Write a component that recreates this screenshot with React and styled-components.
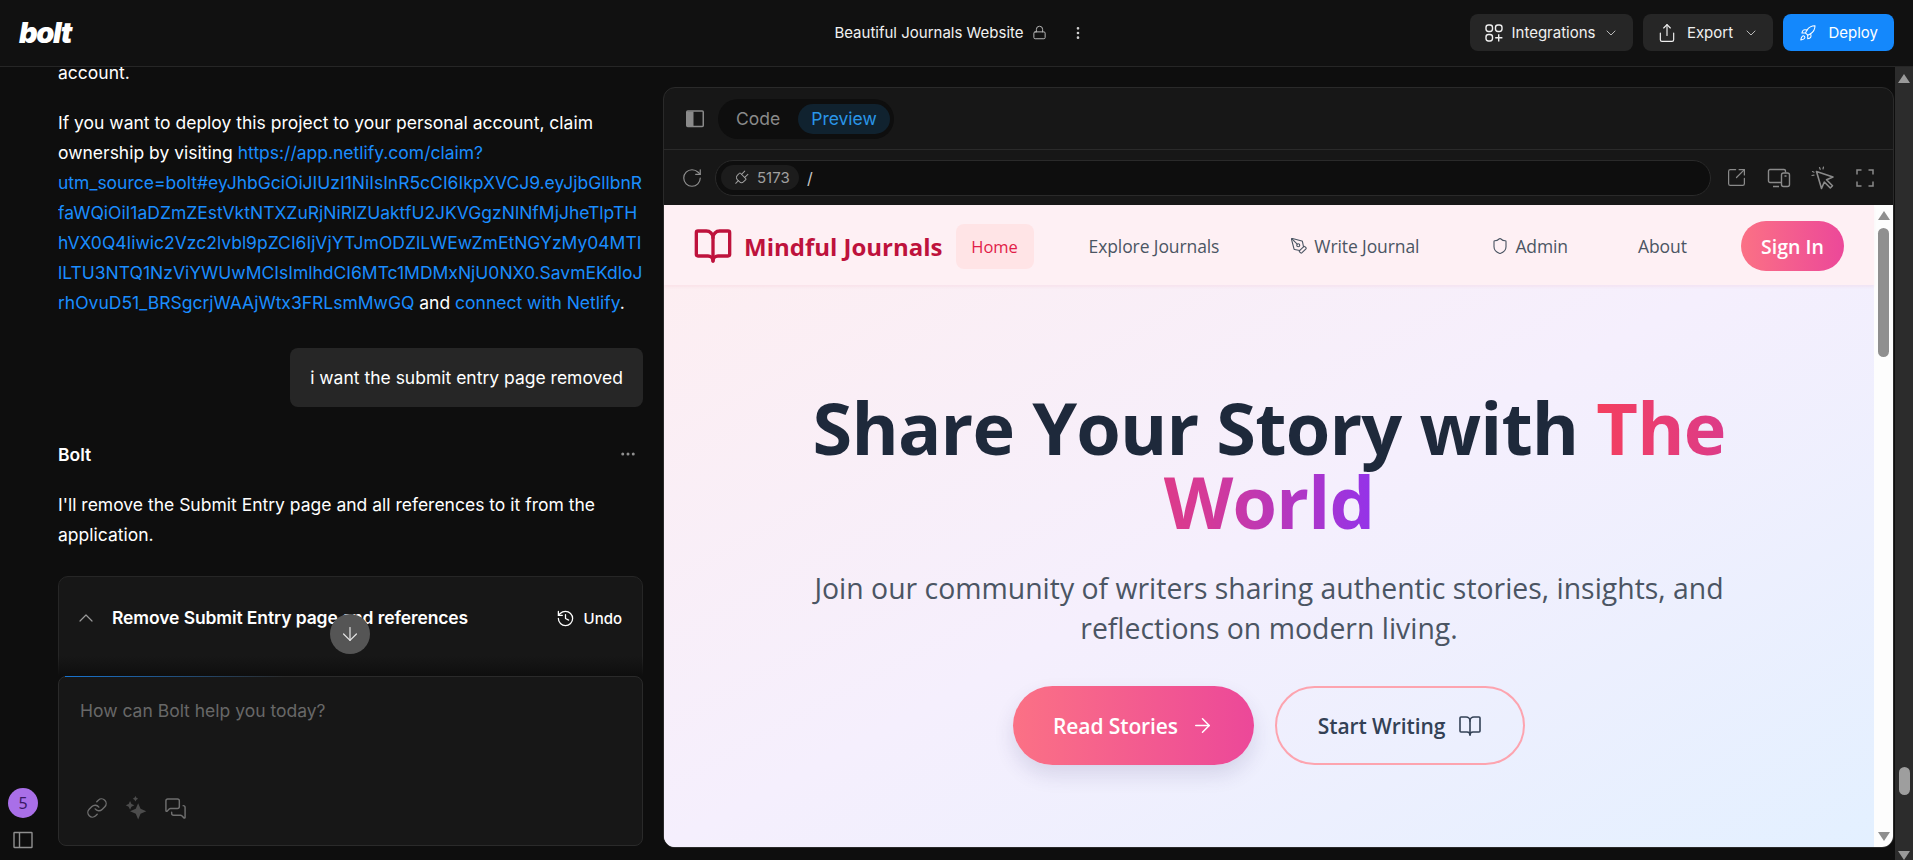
import React from "react";
import styled, { createGlobalStyle } from "styled-components";
import {
  ArrowDown,
  ArrowRight,
  BookOpen,
  ChevronDown,
  ChevronUp,
  History,
  Link,
  Lock,
  MessagesSquare,
  MoreHorizontal,
  MoreVertical,
  PenTool,
  Plug,
  RotateCw,
  Rocket,
  Share,
  Shield,
  SquareArrowOutUpRight,
} from "lucide-react";

const GlobalStyles = createGlobalStyle`
  html, body {
    margin: 0;
    height: 100%;
    overflow: hidden;
    background: #0e0e0e;
  }
  * { box-sizing: border-box; }
`;

const IntegrationsIcon = () => (
  <svg width="20" height="20" viewBox="0 0 20 20" fill="none" stroke="currentColor" strokeWidth="1.4">
    <rect x="2" y="2" width="6.5" height="6.5" rx="2.4" />
    <rect x="11.5" y="2" width="6.5" height="6.5" rx="2.4" />
    <rect x="2" y="11.5" width="6.5" height="6.5" rx="2.4" />
    <path d="M14.7 11.2v7.2M11.2 14.8h7.2" />
  </svg>
);

const PanelToggleIcon = () => (
  <svg width="18" height="18" viewBox="0 0 18 18" fill="none">
    <rect x="0.75" y="1" width="16.5" height="15.5" rx="1" stroke="#8a8a8a" strokeWidth="1.5" />
    <rect x="1" y="1.5" width="6.5" height="14.5" fill="#8a8a8a" />
  </svg>
);

const SidebarIcon = () => (
  <svg width="20" height="20" viewBox="0 0 20 20" fill="none" stroke="#8f8f8f" strokeWidth="1.4">
    <rect x="1" y="2.5" width="18" height="15" rx="0.5" />
    <path d="M6.5 2.5v15" />
  </svg>
);

const StarsIcon = () => (
  <svg width="24" height="26" viewBox="0 0 22 24" fill="#4c4c4c">
    <path d="M13 7.5l2.2 5.3 5.3 2.2-5.3 2.2L13 22.5l-2.2-5.3L5.500 15l5.300-2.200z" />
    <path d="M5.500 5.500l1.300 2.700 2.700 1.300-2.700 1.300-1.300 2.700-1.300-2.700-2.700-1.300 2.700-1.300z" />
    <path d="M10.500 1l.9 1.600 1.600.9-1.600.9-.9 1.600-.9-1.600-1.600-.9 1.600-.9z" />
  </svg>
);

const DevicesIcon = () => (
  <svg width="24" height="20" viewBox="0 0 24 20" fill="none" stroke="currentColor" strokeWidth="1.4" strokeLinejoin="round">
    <path d="M14 14.500H3a1.500 1.500 0 0 1-1.500-1.500V3A1.500 1.500 0 0 1 3 1.500h14A1.500 1.500 0 0 1 18.500 3v1.500" />
    <rect x="14.500" y="5" width="8" height="13.500" rx="2" />
    <path d="M6 18.500h6M17.500 8h2" />
  </svg>
);

const PickerIcon = () => (
  <svg width="24" height="24" viewBox="0 0 24 24" fill="none" stroke="currentColor" strokeWidth="1.6" strokeLinejoin="round" strokeLinecap="round">
    <path d="M5.500 5.500L22 11l-6.500 2.800 6 6-2.200 2.200-6-6L10.500 22.500z" />
    <path d="M8.500 1.500l.7 1.800M12.500 1l-.5 2M1 9.500l2-.3M1.500 5.500l1.500.7" strokeWidth="1.200" />
  </svg>
);

const CornersIcon = () => (
  <svg width="20" height="20" viewBox="0 0 20 20" fill="none" stroke="currentColor" strokeWidth="1.5">
    <path d="M2 6.500V2h4.500M13.500 2H18v4.500M18 13.500V18h-4.500M6.500 18H2v-4.500" />
  </svg>
);

const App = () => {
  return (
    <Page>
      <GlobalStyles />
      <TopBar>
        <Logo>bolt</Logo>
        <ProjectTitle>
          Beautiful Journals Website
          <Lock size={15} color="#b5b5b5" strokeWidth={1.6} />
          <MoreVertical size={16} color="#d0d0d0" style={{ marginLeft: 15 }} />
        </ProjectTitle>
        <TopActions>
          <DarkButton $width={163}>
            <IntegrationsIcon />
            Integrations
            <ChevronDown size={16} strokeWidth={1.4} color="#c4c4c4" />
          </DarkButton>
          <DarkButton $width={130}>
            <Share size={20} strokeWidth={1.4} />
            Export
            <ChevronDown size={16} strokeWidth={1.4} color="#c4c4c4" />
          </DarkButton>
          <DeployButton>
            <Rocket size={20} strokeWidth={1.4} />
            Deploy
          </DeployButton>
        </TopActions>
      </TopBar>

      <Body>
        <Rail>
          <Avatar>5</Avatar>
          <SidebarIcon />
        </Rail>

        <ChatColumn>
          <Messages>
            <Paragraph $first>account.</Paragraph>
            <Paragraph>
              If you want to deploy this project to your personal account, claim
              <br />
              ownership by visiting <ChatLink>https://app.netlify.com/claim?</ChatLink>
              <br />
              <ChatLink>utm_source=bolt#eyJhbGciOiJIUzI1NiIsInR5cCI6IkpXVCJ9.eyJjbGllbnR</ChatLink>
              <br />
              <ChatLink>faWQiOiI1aDZmZEstVktNTXZuRjNiRlZUaktfU2JKVGgzNlNfMjJheTlpTH</ChatLink>
              <br />
              <ChatLink>hVX0Q4Iiwic2Vzc2lvbl9pZCI6IjVjYTJmODZlLWEwZmEtNGYzMy04MTI</ChatLink>
              <br />
              <ChatLink>lLTU3NTQ1NzViYWUwMCIsImlhdCI6MTc1MDMxNjU0NX0.SavmEKdloJ</ChatLink>
              <br />
              <ChatLink>rhOvuD51_BRSgcrjWAAjWtx3FRLsmMwGQ</ChatLink> and{" "}
              <ChatLink>connect with Netlify</ChatLink>.
            </Paragraph>

            <UserBubble>i want the submit entry page removed</UserBubble>

            <AuthorRow>
              Bolt
              <MoreHorizontal size={18} color="#8f8f8f" />
            </AuthorRow>

            <Paragraph>
              I'll remove the Submit Entry page and all references to it from the
              <br />
              application.
            </Paragraph>

            <ActionCard>
              <ChevronUp size={24} strokeWidth={1.2} color="#9a9a9a" />
              <ActionTitle>Remove Submit Entry page and references</ActionTitle>
              <UndoButton>
                <History size={19} strokeWidth={1.6} />
                Undo
              </UndoButton>
            </ActionCard>

            <FadeOut />
            <ScrollDown>
              <ArrowDown size={22} strokeWidth={1.3} />
            </ScrollDown>
          </Messages>

          <PromptBox>
            <Placeholder>How can Bolt help you today?</Placeholder>
            <PromptTools>
              <Link size={22} strokeWidth={1.5} />
              <StarsIcon />
              <MessagesSquare size={23} strokeWidth={1.5} />
            </PromptTools>
          </PromptBox>
        </ChatColumn>

        <Workbench>
          <TabsRow>
            <PanelToggleIcon />
            <Tabs>
              <Tab>Code</Tab>
              <Tab $active>Preview</Tab>
            </Tabs>
          </TabsRow>

          <UrlRow>
            <RotateCw size={22} strokeWidth={1.3} color="#8f8f8f" />
            <UrlBar>
              <PortChip>
                <Plug size={18} strokeWidth={1.3} style={{ transform: "rotate(45deg)" }} />
                5173
              </PortChip>
              <UrlPath>/</UrlPath>
            </UrlBar>
            <UrlTools>
              <SquareArrowOutUpRight size={21} strokeWidth={1.4} />
              <DevicesIcon />
              <PickerIcon />
              <CornersIcon />
            </UrlTools>
          </UrlRow>

          <Viewport>
            <Site>
              <SiteNav>
                <Brand>
                  <BookOpen size={40} strokeWidth={2} color="#be123c" />
                  Mindful Journals
                </Brand>
                <HomeLink>Home</HomeLink>
                <NavLink $left={55}>Explore Journals</NavLink>
                <NavLink $left={71}>
                  <PenTool size={18} strokeWidth={1.5} />
                  Write Journal
                </NavLink>
                <NavLink $left={72}>
                  <Shield size={18} strokeWidth={1.5} />
                  Admin
                </NavLink>
                <NavLink $left={70}>About</NavLink>
                <SignIn>Sign In</SignIn>
              </SiteNav>

              <Hero>
                <Headline>
                  Share Your Story with <GradientWords>The<br />World</GradientWords>
                </Headline>
                <Subtitle>
                  Join our community of writers sharing authentic stories, insights, and
                  <br />
                  reflections on modern living.
                </Subtitle>
                <HeroButtons>
                  <PrimaryCta>
                    Read Stories
                    <ArrowRight size={23} strokeWidth={1.6} />
                  </PrimaryCta>
                  <SecondaryCta>
                    Start Writing
                    <BookOpen size={24} strokeWidth={1.6} />
                  </SecondaryCta>
                </HeroButtons>
              </Hero>
            </Site>
            <InnerScrollbar>
              <ArrowUp $color="#8e8e8e" />
              <InnerThumb />
              <ArrowDownShape $color="#8e8e8e" />
            </InnerScrollbar>
          </Viewport>
        </Workbench>

        <OuterScrollbar>
          <ArrowUp $color="#9a9a9a" />
          <OuterThumb />
          <ArrowDownShape $color="#9a9a9a" />
        </OuterScrollbar>
      </Body>
    </Page>
  );
};

const Page = styled.div`
  display: flex;
  flex-direction: column;
  height: 860px;
  background: #0e0e0e;
  color: #fff;
  font-family: Inter, "Liberation Sans", sans-serif;
  font-size: 17.5px;
`;

const TopBar = styled.header`
  display: grid;
  grid-template-columns: 1fr auto 1fr;
  align-items: center;
  height: 67px;
  padding: 0 19px 1px 19px;
  background: #111;
  border-bottom: 1px solid #262626;
`;

const Logo = styled.div`
  font-size: 29px;
  font-weight: 900;
  font-style: italic;
  letter-spacing: -1.4px;
  line-height: 1;
`;

const ProjectTitle = styled.div`
  display: flex;
  align-items: center;
  gap: 8px;
  padding-left: 7px;
  font-size: 15px;
  color: #f2f2f2;
`;

const TopActions = styled.div`
  display: flex;
  justify-content: flex-end;
  gap: 10px;
`;

const DarkButton = styled.div`
  display: flex;
  align-items: center;
  justify-content: space-between;
  width: ${(p) => p.$width}px;
  height: 37px;
  padding: 0 14px;
  border-radius: 8px;
  background: #262626;
  font-size: 15px;
  color: #f0f0f0;
`;

const DeployButton = styled(DarkButton)`
  justify-content: flex-start;
  gap: 12px;
  width: 111px;
  padding: 0 16px;
  background: #1488fc;
  color: #fff;
`;

const Body = styled.div`
  display: flex;
  flex: 1;
  min-height: 0;
`;

const Rail = styled.aside`
  display: flex;
  flex-direction: column;
  align-items: center;
  justify-content: flex-end;
  gap: 12px;
  width: 46px;
  margin-right: 12px;
  padding-bottom: 10px;
`;

const Avatar = styled.div`
  display: flex;
  align-items: center;
  justify-content: center;
  width: 30px;
  height: 30px;
  border-radius: 50%;
  background: #a96fe8;
  color: #3b1a66;
  font-family: "Noto Sans", sans-serif;
  font-size: 16px;
`;

const ChatColumn = styled.section`
  display: flex;
  flex-direction: column;
  width: 585px;
  margin-right: 20px;
  padding-bottom: 14px;
`;

const Messages = styled.div`
  position: relative;
  flex: 1;
  min-height: 0;
  overflow: hidden;
`;

const Paragraph = styled.p`
  margin: ${(p) => (p.$first ? "-9px 0 20px" : "0 0 20px")};
  line-height: 30px;
  white-space: nowrap;
  color: #fff;
`;

const ChatLink = styled.span`
  color: #1a8dff;
`;

const UserBubble = styled.div`
  width: fit-content;
  margin: 30px 0 0 auto;
  padding: 14.5px 20px;
  border-radius: 8px;
  background: #262626;
  line-height: 30px;
`;

const AuthorRow = styled.div`
  display: flex;
  align-items: center;
  justify-content: space-between;
  height: 30px;
  margin: 32px 6px 21px 0;
  font-weight: 600;
`;

const ActionCard = styled.div`
  display: flex;
  align-items: flex-start;
  height: 120px;
  margin-top: 26px;
  padding: 29px 20px 0 15px;
  border: 1px solid #262626;
  border-radius: 10px;
  background: #171717;
`;

const ActionTitle = styled.div`
  flex: 1;
  margin-left: 14px;
  line-height: 24px;
  font-weight: 600;
  letter-spacing: -0.1px;
`;

const UndoButton = styled.div`
  display: flex;
  align-items: center;
  gap: 9px;
  height: 24px;
  font-size: 15px;
  font-weight: 500;
`;

const FadeOut = styled.div`
  position: absolute;
  left: 0;
  right: 0;
  bottom: 0;
  height: 20px;
  background: linear-gradient(to bottom, rgba(14, 14, 14, 0), #0e0e0e);
`;

const ScrollDown = styled.div`
  position: absolute;
  left: 272px;
  bottom: 22px;
  display: flex;
  align-items: center;
  justify-content: center;
  width: 40px;
  height: 40px;
  border-radius: 50%;
  background: #555;
  color: #e6e6e6;
`;

const PromptBox = styled.div`
  position: relative;
  display: flex;
  flex-direction: column;
  justify-content: space-between;
  height: 170px;
  padding: 22px 21px 24px;
  border: 1px solid #2a2a2a;
  border-radius: 8px;
  background: #171717;

  &::before {
    content: "";
    position: absolute;
    top: -1px;
    left: 6px;
    width: 220px;
    height: 1px;
    background: linear-gradient(to right, rgba(20, 136, 252, 0.8), rgba(20, 136, 252, 0));
  }
`;

const Placeholder = styled.div`
  color: #686868;
  line-height: 24px;
`;

const PromptTools = styled.div`
  display: flex;
  align-items: center;
  gap: 16px;
  padding-left: 6px;
  color: #6f6f6f;
`;

const Workbench = styled.main`
  display: flex;
  flex-direction: column;
  width: 1231px;
  height: 761px;
  margin-top: 20px;
  border: 1px solid #2a2a2a;
  border-radius: 12px;
  background: #171717;
  overflow: hidden;
`;

const TabsRow = styled.div`
  display: flex;
  align-items: center;
  gap: 14px;
  height: 62px;
  padding-left: 22px;
  border-bottom: 1px solid #2a2a2a;
  flex-shrink: 0;
`;

const Tabs = styled.div`
  display: flex;
  align-items: center;
  gap: 4px;
  height: 40px;
  padding: 0 4px;
  border-radius: 20px;
  background: #0e0e0e;
  font-size: 17.5px;
`;

const Tab = styled.div`
  display: flex;
  align-items: center;
  height: 30px;
  padding: 0 ${(p) => (p.$active ? 13 : 14)}px;
  border-radius: 15px;
  background: ${(p) => (p.$active ? "#10222f" : "transparent")};
  color: ${(p) => (p.$active ? "#2a96e8" : "#8a8a8a")};
`;

const UrlRow = styled.div`
  display: flex;
  align-items: center;
  gap: 12px;
  height: 55px;
  padding: 0 18px 0 17px;
  flex-shrink: 0;
`;

const UrlBar = styled.div`
  display: flex;
  align-items: center;
  gap: 8px;
  flex: 1;
  height: 36px;
  padding-left: 5px;
  border: 1px solid #2a2a2a;
  border-radius: 18px;
  background: #0e0e0e;
  font-size: 16px;
`;

const PortChip = styled.div`
  display: flex;
  align-items: center;
  gap: 7px;
  width: 78px;
  height: 25px;
  padding-left: 11px;
  border-radius: 13px;
  background: #1c1c1c;
  font-size: 15px;
  color: #a0a0a0;
`;

const UrlPath = styled.span`
  color: #c8c8c8;
`;

const UrlTools = styled.div`
  display: flex;
  align-items: center;
  gap: 20px;
  margin-left: 3px;
  color: #8a8a8a;
`;

const Viewport = styled.div`
  display: flex;
  flex: 1;
  min-height: 0;
  background: #fdfdfd;
`;

const Site = styled.div`
  flex: 1;
  min-width: 0;
  font-family: "Open Sans", "Noto Sans", sans-serif;
  background: linear-gradient(to bottom right, #feeef0 0%, #f5effd 50%, #e3f0ff 100%);
`;

const SiteNav = styled.nav`
  display: flex;
  align-items: center;
  height: 80px;
  padding: 2px 30px 0 29px;
  background: #fef0f4;
  box-shadow: 0 2px 3px rgba(190, 18, 60, 0.05);
`;

const Brand = styled.div`
  display: flex;
  align-items: center;
  gap: 11px;
  font-size: 24px;
  font-weight: 700;
  color: #be123c;
`;

const HomeLink = styled.div`
  display: flex;
  align-items: center;
  justify-content: center;
  width: 78px;
  height: 45px;
  margin-left: 13px;
  border-radius: 8px;
  background: #ffe4e6;
  font-size: 16.5px;
  color: #e11d48;
`;

const NavLink = styled.div`
  display: flex;
  align-items: center;
  gap: 6px;
  margin-left: ${(p) => p.$left}px;
  font-size: 17.5px;
  letter-spacing: -0.1px;
  color: #4b5563;
`;

const SignIn = styled.div`
  display: flex;
  align-items: center;
  justify-content: center;
  width: 103px;
  height: 50px;
  margin-left: auto;
  border-radius: 25px;
  background: linear-gradient(90deg, #fb7185, #ec4899);
  font-size: 19.5px;
  font-weight: 600;
  color: #fff;
`;

const Hero = styled.div`
  display: flex;
  flex-direction: column;
  align-items: center;
  padding-top: 105px;
  text-align: center;
`;

const Headline = styled.h1`
  margin: 0;
  font-size: 72px;
  font-weight: 700;
  line-height: 74px;
  letter-spacing: -0.8px;
  color: #1e293b;
`;

const GradientWords = styled.span`
  background: linear-gradient(90deg, #f43f5e 0%, #d53a97 50%, #9333ea 100%);
  -webkit-background-clip: text;
  background-clip: text;
  color: transparent;
`;

const Subtitle = styled.p`
  margin: 30px 0 38px;
  font-size: 28.4px;
  line-height: 40px;
  font-weight: 400;
  color: #4b5563;
`;

const HeroButtons = styled.div`
  display: flex;
  gap: 21px;
`;

const PrimaryCta = styled.div`
  display: flex;
  align-items: center;
  justify-content: center;
  gap: 13px;
  width: 241px;
  height: 79px;
  border-radius: 40px;
  background: linear-gradient(90deg, #fb7185, #ec4899);
  box-shadow: 0 10px 20px rgba(60, 50, 110, 0.14);
  font-size: 21px;
  font-weight: 600;
  letter-spacing: -0.1px;
  color: #fff;
`;

const SecondaryCta = styled(PrimaryCta)`
  width: 250px;
  background: transparent;
  border: 2px solid #fda4af;
  box-shadow: none;
  color: #334155;
`;

const InnerScrollbar = styled.div`
  display: flex;
  flex-direction: column;
  align-items: center;
  width: 19px;
  padding: 6px 0;
  flex-shrink: 0;
`;

const ArrowUp = styled.div`
  width: 0;
  height: 0;
  border-left: 6px solid transparent;
  border-right: 6px solid transparent;
  border-bottom: 9px solid ${(p) => p.$color};
`;

const ArrowDownShape = styled.div`
  width: 0;
  height: 0;
  margin-top: auto;
  border-left: 6px solid transparent;
  border-right: 6px solid transparent;
  border-top: 9px solid ${(p) => p.$color};
`;

const InnerThumb = styled.div`
  width: 11px;
  height: 129px;
  margin-top: 8px;
  border-radius: 6px;
  background: #8f8f8f;
`;

const OuterScrollbar = styled.div`
  display: flex;
  flex-direction: column;
  align-items: center;
  width: 18px;
  margin-left: 1px;
  padding: 7px 0 0;
  background: #2c2c2c;
`;

const OuterThumb = styled.div`
  width: 11px;
  height: 28px;
  margin-top: 684px;
  border-radius: 6px;
  background: #9e9e9e;
`;

export default App;
